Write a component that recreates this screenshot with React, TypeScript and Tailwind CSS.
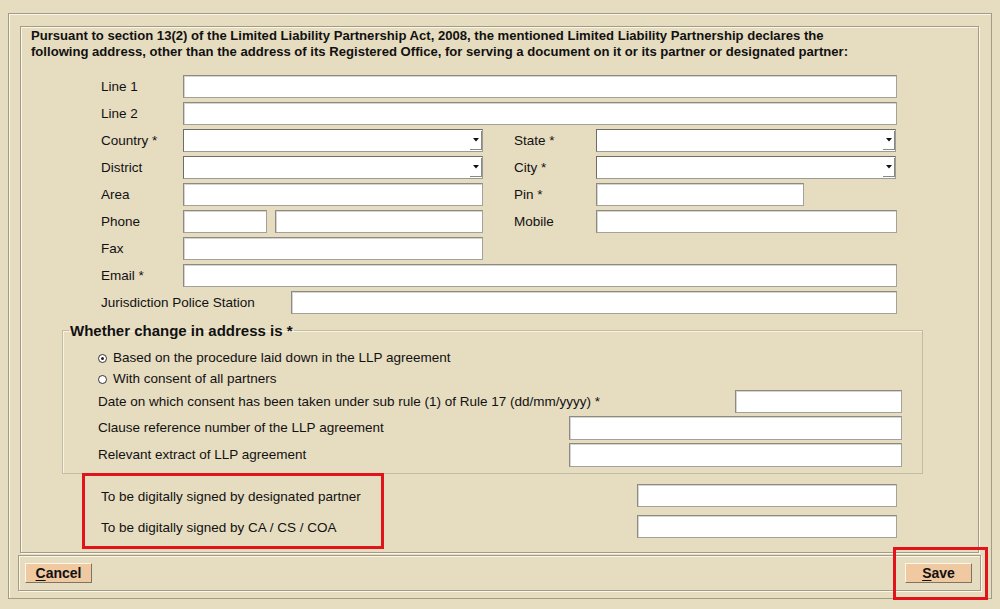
import React from "react";

const inputCls =
  "h-[23px] bg-white border border-[#a3a19a] border-t-[#8c8a84] border-l-[#8c8a84] shadow-[inset_1px_1px_0_#d6d4cc]";

function Input({ w, h = 23 }: { w: string; h?: number }) {
  return <div className={`${inputCls} ${w} shrink-0`} style={h !== 23 ? { height: h } : undefined} />;
}

function Select({ w }: { w: string }) {
  return (
    <div
      className={`${w} shrink-0 h-[23px] bg-white border border-[#9c9a94] border-t-[#6e6c66] border-l-[#6e6c66] flex justify-end items-stretch`}
    >
      <div className="w-[12px] my-[1px] mr-[0px] border-r border-b border-[#8a8882] bg-white flex items-center justify-center">
        <svg width="6" height="4" viewBox="0 0 6 4">
          <path d="M0 0 L6 0 L3 3.5 Z" fill="#111" />
        </svg>
      </div>
    </div>
  );
}

function Label({ children, w }: { children: React.ReactNode; w: string }) {
  return <div className={`${w} shrink-0 text-[13.5px] leading-[23px] text-[#111]`}>{children}</div>;
}

function Radio({ checked }: { checked?: boolean }) {
  return (
    <span className="inline-flex w-[9px] h-[9px] rounded-full border border-[#333] bg-white items-center justify-center mr-[6px]">
      {checked && <span className="w-[3px] h-[3px] rounded-full bg-[#222]" />}
    </span>
  );
}

function Btn({ first, rest }: { first: string; rest: string }) {
  return (
    <div className="w-[67px] h-[20px] bg-[#f0c9a1] border border-t-[#fff6ea] border-l-[#fff6ea] border-b-[#7c7466] border-r-[#7c7466] flex items-center justify-center text-[14px] font-bold text-[#111] leading-none">
      <span className="underline underline-offset-2">{first}</span>
      <span>{rest}</span>
    </div>
  );
}

export default function App() {
  return (
    <div
      className="relative w-[1000px] h-[609px] bg-[#e6dcc0] overflow-hidden pt-[13px] pl-[8px]"
      style={{ fontFamily: '"Liberation Sans", Arial, sans-serif' }}
    >
      <div className="w-[984px] h-[586px] border border-[#a29b86] shadow-[inset_1px_1px_0_#fbf6e8] pt-[12px] pb-[6px]">
        {/* main panel */}
        <div className="ml-[11px] mr-[12px] h-[527px] border border-[#a29b86] shadow-[inset_1px_1px_0_#fbf6e8,1px_1px_0_#fbf6e8]">
          <div className="ml-[10px] pt-[1px] text-[13.1px] font-bold leading-[16px] text-[#111] whitespace-nowrap">
            <div>
              Pursuant to section 13(2) of the Limited Liability Partnership Act, 2008, the mentioned Limited Liability
              Partnership declares the
            </div>
            <div>
              following address, other than the address of its Registered Office, for serving a document on it or its
              partner or designated partner:
            </div>
          </div>

          <div className="ml-[80px] mt-[15px] flex flex-col gap-[4px]">
            <div className="flex">
              <Label w="w-[82px]">Line 1</Label>
              <Input w="w-[714px]" />
            </div>
            <div className="flex">
              <Label w="w-[82px]">Line 2</Label>
              <Input w="w-[714px]" />
            </div>
            <div className="flex">
              <Label w="w-[82px]">Country *</Label>
              <Select w="w-[300px]" />
              <div className="w-[31px]" />
              <Label w="w-[82px]">State *</Label>
              <Select w="w-[300px]" />
            </div>
            <div className="flex">
              <Label w="w-[82px]">District</Label>
              <Select w="w-[300px]" />
              <div className="w-[31px]" />
              <Label w="w-[82px]">City *</Label>
              <Select w="w-[300px]" />
            </div>
            <div className="flex">
              <Label w="w-[82px]">Area</Label>
              <Input w="w-[300px]" />
              <div className="w-[31px]" />
              <Label w="w-[82px]">Pin *</Label>
              <Input w="w-[208px]" />
            </div>
            <div className="flex">
              <Label w="w-[82px]">Phone</Label>
              <Input w="w-[84px]" />
              <div className="w-[8px]" />
              <Input w="w-[208px]" />
              <div className="w-[31px]" />
              <Label w="w-[82px]">Mobile</Label>
              <Input w="w-[301px]" />
            </div>
            <div className="flex">
              <Label w="w-[82px]">Fax</Label>
              <Input w="w-[300px]" />
            </div>
            <div className="flex">
              <Label w="w-[82px]">Email *</Label>
              <Input w="w-[714px]" />
            </div>
            <div className="flex">
              <Label w="w-[190px]">Jurisdiction Police Station</Label>
              <Input w="w-[606px]" />
            </div>
          </div>

          <fieldset className="ml-[41px] mt-[8px] w-[861px] border border-[#c3bca5] shadow-[inset_1px_1px_0_#f7f2e2] pl-[35px] pr-[20px] pb-[6px]">
            <legend className="ml-[-29px] px-[1px] text-[15px] font-bold leading-[17px] text-[#111]">
              Whether change in address is *
            </legend>
            <div className="mt-[9px] flex items-center h-[21px] text-[13.5px] text-[#111]">
              <Radio checked />
              Based on the procedure laid down in the LLP agreement
            </div>
            <div className="flex items-center h-[21px] text-[13.5px] text-[#111]">
              <Radio />
              With consent of all partners
            </div>
            <div className="flex justify-between">
              <Label w="w-auto">Date on which consent has been taken under sub rule (1) of Rule 17 (dd/mm/yyyy) *</Label>
              <Input w="w-[167px]" />
            </div>
            <div className="flex justify-between mt-[3px]">
              <div className="text-[13.5px] leading-[24px] text-[#111]">Clause reference number of the LLP agreement</div>
              <Input w="w-[333px]" h={24} />
            </div>
            <div className="flex justify-between mt-[3px]">
              <div className="text-[13.5px] leading-[24px] text-[#111]">Relevant extract of LLP agreement</div>
              <Input w="w-[333px]" h={24} />
            </div>
          </fieldset>

          <div className="flex ml-[61px] -mt-[1px]">
            <div className="w-[302px] h-[76px] border-[3px] border-[#e0141a] pl-[16px] pt-[9px] flex flex-col gap-[8px]">
              <Label w="w-auto">To be digitally signed by designated partner</Label>
              <Label w="w-auto">To be digitally signed by CA / CS / COA</Label>
            </div>
            <div className="ml-[253px] mt-[11px] flex flex-col gap-[8px]">
              <Input w="w-[260px]" />
              <Input w="w-[260px]" />
            </div>
          </div>
        </div>

        {/* footer */}
        <div className="ml-[9px] mr-[10px] mt-[2px] h-[36px] border border-[#a29b86] shadow-[inset_1px_1px_0_#fbf6e8,1px_1px_0_#fbf6e8] flex items-start justify-between pt-[7px] pl-[6px] pr-[8px]">
          <Btn first="C" rest="ancel" />
          <Btn first="S" rest="ave" />
        </div>
      </div>

      <div className="absolute left-[893px] top-[547px] w-[95px] h-[53px] border-[3px] border-[#e0141a]" />
    </div>
  );
}
